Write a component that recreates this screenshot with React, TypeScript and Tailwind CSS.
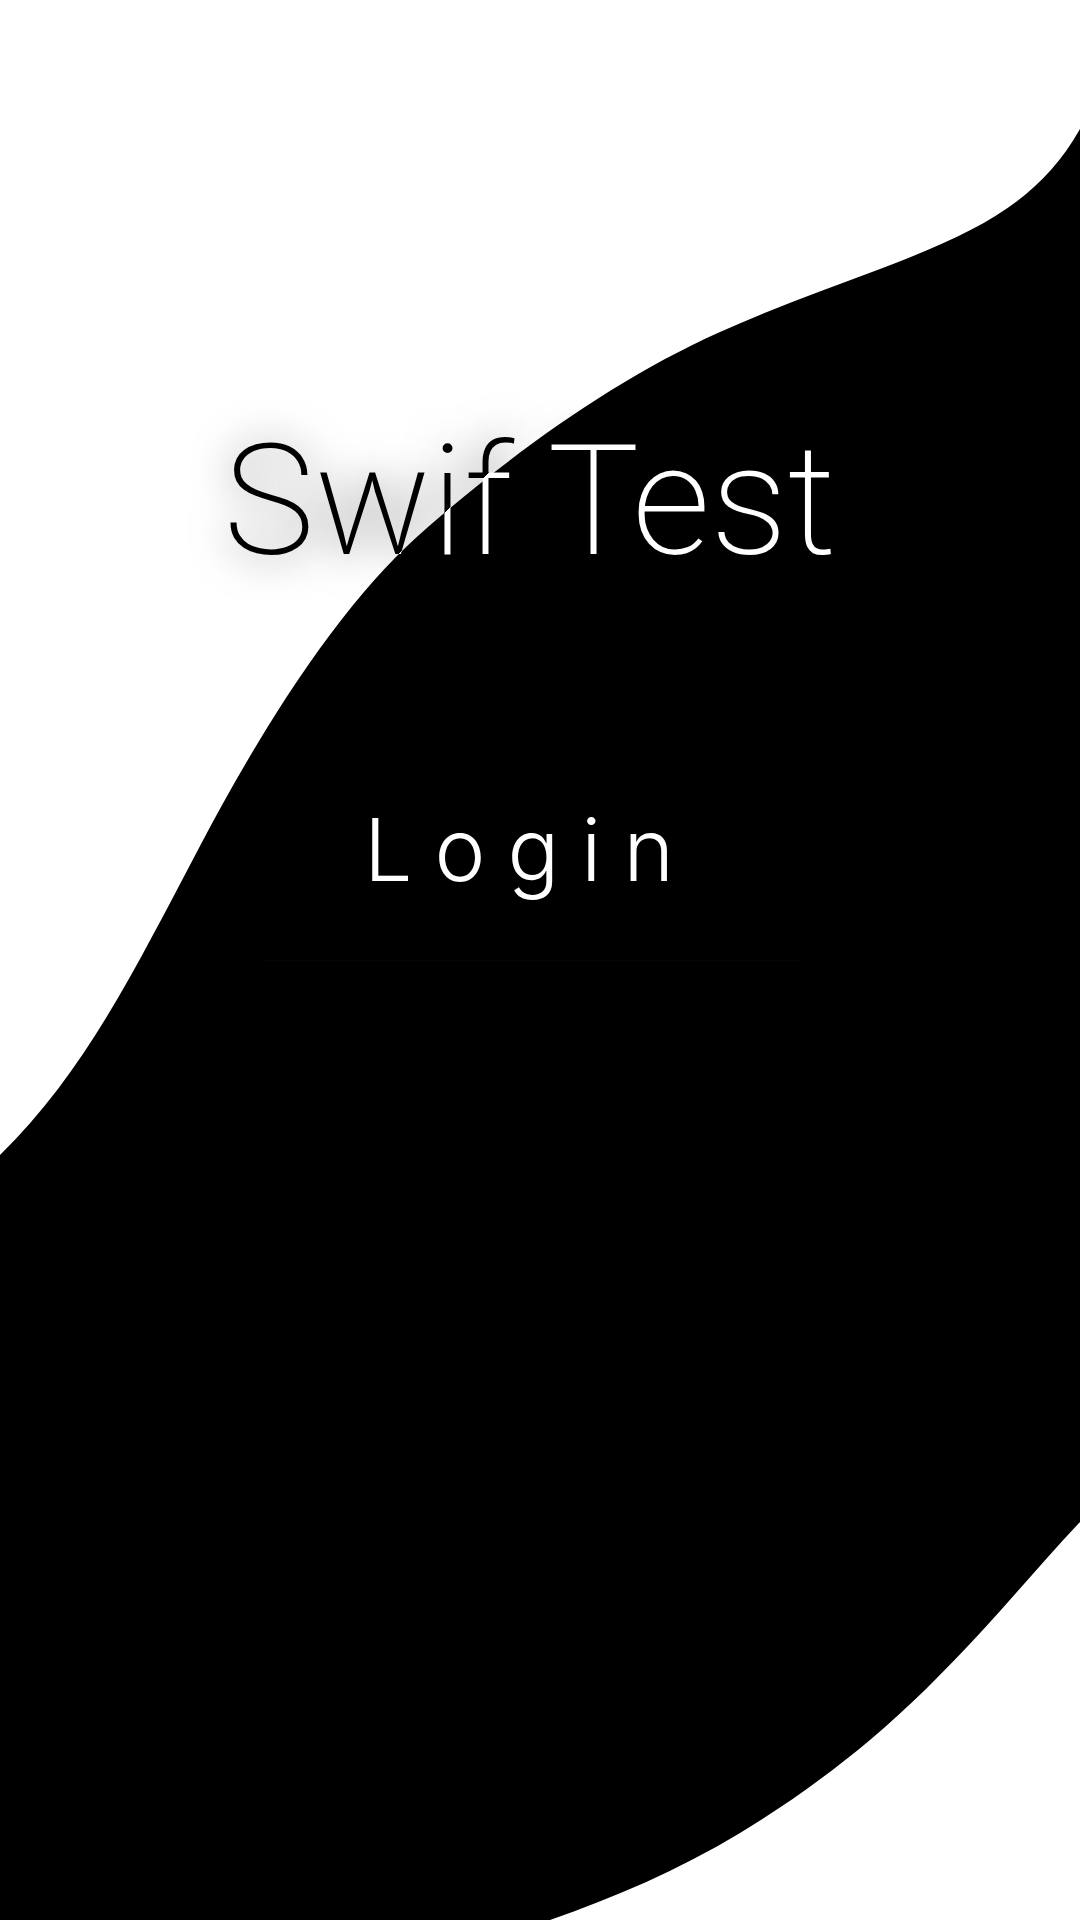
function Wave() {
  return (
    <svg
      className="pointer-events-none absolute inset-0 z-10 h-full w-full"
      viewBox="0 0 1080 1920"
      preserveAspectRatio="none"
      aria-hidden="true"
    >
      <path
        fill="#000"
        d="M0 1155C85 1072 135 969 200 846C278 698 354 590 428 527C513 453 615 379 720 332C773 308 827 289 880 269C980 231 1040 200 1080 129V1522C1047 1557 1015 1595 981 1632C945 1671 908 1708 870 1740C828 1775 786 1805 740 1833C679 1870 613 1898 550 1920H0Z"
      />
    </svg>
  );
}

function Title() {
  return (
    <h1 className="relative whitespace-pre font-['Roboto',sans-serif] text-[154px] leading-[188px] font-extralight before:absolute before:inset-0 before:z-0 before:text-transparent before:content-['Swif_Test'] before:[text-shadow:0_2px_40px_rgba(0,0,0,0.6)]">
      <span className="relative z-20 block bg-[linear-gradient(138deg,#000_226px,#fff_226px)] bg-clip-text text-transparent">
        Swif Test
      </span>
    </h1>
  );
}

export default function App() {
  return (
    <main className="relative isolate flex min-h-screen w-full flex-col items-center overflow-hidden bg-white pt-[408px] pr-5">
      <Wave />
      <Title />
      <button
        type="button"
        className="relative z-20 mt-[198px] cursor-pointer border-b border-[#040404] px-[104px] pb-[54px] font-['Inter',sans-serif] text-[86px] leading-[112px] font-light tracking-[22px] text-white"
      >
        Login
      </button>
    </main>
  );
}
